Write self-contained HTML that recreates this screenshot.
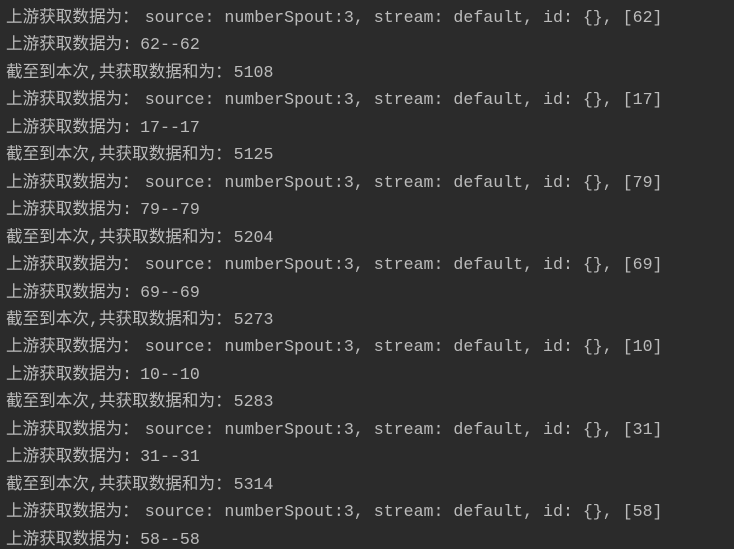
<!DOCTYPE html>
<html><head><meta charset="utf-8"><style>
html,body{margin:0;padding:0;background:#2b2b2b;width:734px;height:549px;overflow:hidden}
pre{margin:0;padding:4px 0 0 6px;font-family:"Liberation Mono","Noto Sans CJK SC",monospace;font-size:16.6px;line-height:27.45px;color:#bbbbbb}
.a{margin-right:-4px}.b{margin-right:-2px}.c{margin-right:-8px}
</style></head><body><pre><span class="a">上游获取数据为：</span> source: numberSpout:3, stream: default, id: {}, [62]
<span class="b">上游获取数据为:</span> 62--62
<span class="c">截至到本次,共获取数据和为：</span> 5108
<span class="a">上游获取数据为：</span> source: numberSpout:3, stream: default, id: {}, [17]
<span class="b">上游获取数据为:</span> 17--17
<span class="c">截至到本次,共获取数据和为：</span> 5125
<span class="a">上游获取数据为：</span> source: numberSpout:3, stream: default, id: {}, [79]
<span class="b">上游获取数据为:</span> 79--79
<span class="c">截至到本次,共获取数据和为：</span> 5204
<span class="a">上游获取数据为：</span> source: numberSpout:3, stream: default, id: {}, [69]
<span class="b">上游获取数据为:</span> 69--69
<span class="c">截至到本次,共获取数据和为：</span> 5273
<span class="a">上游获取数据为：</span> source: numberSpout:3, stream: default, id: {}, [10]
<span class="b">上游获取数据为:</span> 10--10
<span class="c">截至到本次,共获取数据和为：</span> 5283
<span class="a">上游获取数据为：</span> source: numberSpout:3, stream: default, id: {}, [31]
<span class="b">上游获取数据为:</span> 31--31
<span class="c">截至到本次,共获取数据和为：</span> 5314
<span class="a">上游获取数据为：</span> source: numberSpout:3, stream: default, id: {}, [58]
<span class="b">上游获取数据为:</span> 58--58</pre></body></html>
